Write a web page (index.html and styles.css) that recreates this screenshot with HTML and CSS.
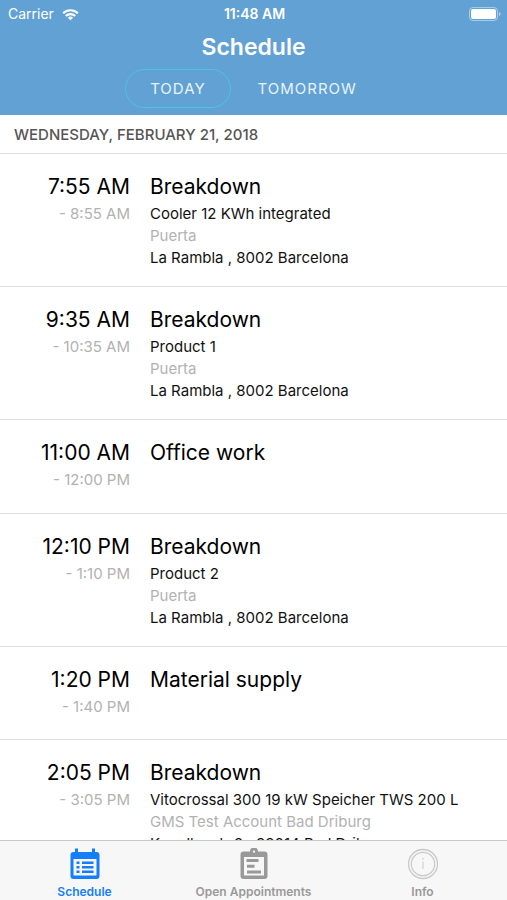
FILE: index.html
```html
<!DOCTYPE html>
<html lang="en">
<head>
<meta charset="utf-8">
<meta name="viewport" content="width=device-width, initial-scale=1">
<title>Schedule</title>
<link rel="stylesheet" href="styles.css">
</head>
<body>
<header class="header">
  <div class="status">
    <div class="carrier">
      <span>Carrier</span>
      <svg class="wifi" viewBox="0 0 18 13" aria-hidden="true">
        <path d="M1.2 5.2a11.2 11.2 0 0 1 15.6 0M4 8.1a7.2 7.2 0 0 1 10 0" fill="none" stroke="currentColor" stroke-width="2.2"/>
        <path d="M9 12.6 6.2 9.9a4 4 0 0 1 5.6 0z" fill="currentColor"/>
      </svg>
    </div>
    <time class="clock">11:48 AM</time>
    <svg class="battery" viewBox="0 0 32 14" role="img" aria-label="Battery full">
      <rect x="0.5" y="0.5" width="28" height="13" rx="3.5" fill="none" stroke="#fff" stroke-opacity=".45"/>
      <rect x="2" y="2" width="25" height="10" rx="2" fill="#fff"/>
      <path d="M30 5v4q1.6-.6 1.6-2T30 5z" fill="#fff" fill-opacity=".5"/>
    </svg>
  </div>
  <h1 class="title">Schedule</h1>
  <div class="switch">
    <button class="pill pill-active" type="button">TODAY</button>
    <button class="pill" type="button">TOMORROW</button>
  </div>
</header>
<main class="agenda">
  <h2 class="day">WEDNESDAY, FEBRUARY 21, 2018</h2>
  <ul class="list">
    <li class="row">
      <div class="times"><p class="big">7:55 AM</p><p class="muted">- 8:55 AM</p></div>
      <div class="details"><h3 class="big">Breakdown</h3><p>Cooler 12 KWh integrated</p><p class="muted">Puerta</p><p>La Rambla , 8002 Barcelona</p></div>
    </li>
    <li class="row">
      <div class="times"><p class="big">9:35 AM</p><p class="muted">- 10:35 AM</p></div>
      <div class="details"><h3 class="big">Breakdown</h3><p>Product 1</p><p class="muted">Puerta</p><p>La Rambla , 8002 Barcelona</p></div>
    </li>
    <li class="row">
      <div class="times"><p class="big">11:00 AM</p><p class="muted">- 12:00 PM</p></div>
      <div class="details"><h3 class="big">Office work</h3></div>
    </li>
    <li class="row">
      <div class="times"><p class="big">12:10 PM</p><p class="muted">- 1:10 PM</p></div>
      <div class="details"><h3 class="big">Breakdown</h3><p>Product 2</p><p class="muted">Puerta</p><p>La Rambla , 8002 Barcelona</p></div>
    </li>
    <li class="row">
      <div class="times"><p class="big">1:20 PM</p><p class="muted">- 1:40 PM</p></div>
      <div class="details"><h3 class="big">Material supply</h3></div>
    </li>
    <li class="row">
      <div class="times"><p class="big">2:05 PM</p><p class="muted">- 3:05 PM</p></div>
      <div class="details"><h3 class="big">Breakdown</h3><p>Vitocrossal 300 19 kW Speicher TWS 200 L</p><p class="muted">GMS Test Account Bad Driburg</p><p>Kapellenstr 2 , 33014 Bad Driburg</p></div>
    </li>
  </ul>
</main>
<nav class="tabs">
  <a class="tab tab-active" href="#schedule">
    <svg class="icon" viewBox="0 0 32 32" aria-hidden="true">
      <path fill="currentColor" fill-rule="evenodd" d="M6 .5h3V4h14V.5h3V4h1.500a3 3 0 0 1 3 3v21a3 3 0 0 1-3 3h-23a3 3 0 0 1-3-3V7a3 3 0 0 1 3-3H6zM4.500 11v16.500h23V11z"/>
      <path fill="currentColor" d="M7.500 13.500h3v2.500h-3zM13 13.500h11.500v2.500H13zM7.500 18h3v2.500h-3zM13 18h11.500v2.500H13zM7.500 22.500h3v2.500h-3zM13 22.500h11.500v2.500H13z"/>
    </svg>
    <span>Schedule</span>
  </a>
  <a class="tab" href="#appointments">
    <svg class="icon" viewBox="0 0 32 32" aria-hidden="true">
      <path fill="currentColor" fill-rule="evenodd" d="M5.500 3.500H12a4 4 0 0 1 8 0h6.500a3 3 0 0 1 3 3V28a3 3 0 0 1-3 3h-21a3 3 0 0 1-3-3V6.500a3 3 0 0 1 3-3zM6 9v18.500h20V9zM14.800 3.600a1.200 1.200 0 1 0 2.400 0 1.200 1.200 0 1 0-2.400 0z"/>
      <path fill="currentColor" d="M8.500 11h12v3h-12zM9 16.700h7.500v3H9zM9 22.500h14v3H9z"/>
    </svg>
    <span>Open Appointments</span>
  </a>
  <a class="tab" href="#info">
    <svg class="icon" viewBox="0 0 32 32" aria-hidden="true">
      <g fill="none" stroke="#c8c8c8"><circle cx="16" cy="16" r="14.500" stroke-width="1.300"/><circle cx="16" cy="16" r="11.700" stroke-width="1.200"/><path d="M16 13.500V21" stroke-width="1"/></g>
      <circle cx="16" cy="10.800" r=".8" fill="#c8c8c8"/>
    </svg>
    <span>Info</span>
  </a>
</nav>
</body>
</html>
```

FILE: styles.css
```css
* { box-sizing: border-box; }

body {
  margin: 0;
  height: 100vh;
  display: flex;
  flex-direction: column;
  overflow: hidden;
  background: #fff;
  color: #111;
  font-family: Inter, "Liberation Sans", sans-serif;
  font-size: 15px;
  line-height: 22px;
}

h1, h2, h3, p, ul { margin: 0; padding: 0; }

.header {
  flex: none;
  padding-bottom: 7px;
  background: #62a1d3;
  color: #fff;
}

.status {
  display: grid;
  grid-template-columns: 1fr auto 1fr;
  align-items: center;
  padding: 3px 6px 3px 8px;
  font-size: 14px;
}

.carrier { display: flex; align-items: center; gap: 8px; }
.wifi { width: 17px; height: 13px; }
.clock { font-weight: 600; }
.battery { width: 32px; height: 14px; justify-self: end; }

.title {
  font-size: 23px;
  font-weight: 600;
  line-height: 38px;
  text-align: center;
}

.switch {
  display: flex;
  justify-content: center;
  gap: 2px;
  margin-top: 3px;
}

.pill {
  height: 39px;
  padding: 0 24px;
  border: 1px solid transparent;
  border-radius: 20px;
  background: none;
  color: #e8f3fb;
  font: inherit;
  letter-spacing: 1px;
}

.pill-active { border-color: #4cc4e4; }

.agenda { flex: 1; min-height: 0; overflow: hidden; }

.day {
  padding: 9px 14px 7px;
  border-bottom: 1px solid #dedede;
  color: #555;
  font-size: 15px;
  font-weight: 500;
}

.list { list-style: none; }

.row {
  display: grid;
  grid-template-columns: 130px 1fr;
  column-gap: 20px;
  padding: 18px 0 17px;
  min-height: 93px;
  border-bottom: 1px solid #dedede;
}

.row:nth-child(3) { min-height: 94px; }

.times { text-align: right; }

.big {
  margin-bottom: 1px;
  color: #000;
  font-size: 21px;
  font-weight: 400;
  line-height: 30px;
}

.muted { color: #b2b2b2; }

.tabs {
  flex: none;
  display: grid;
  grid-template-columns: repeat(3, 1fr);
  border-top: 1px solid #c8c8c8;
  background: #f7f7f7;
}

.tab {
  display: flex;
  flex-direction: column;
  align-items: center;
  gap: 3px;
  padding: 7px 0 0;
  color: #999;
  font-size: 12px;
  font-weight: 600;
  line-height: 17px;
  text-decoration: none;
}

.tab-active { color: #147efb; }
.icon { width: 32px; height: 32px; }
```
